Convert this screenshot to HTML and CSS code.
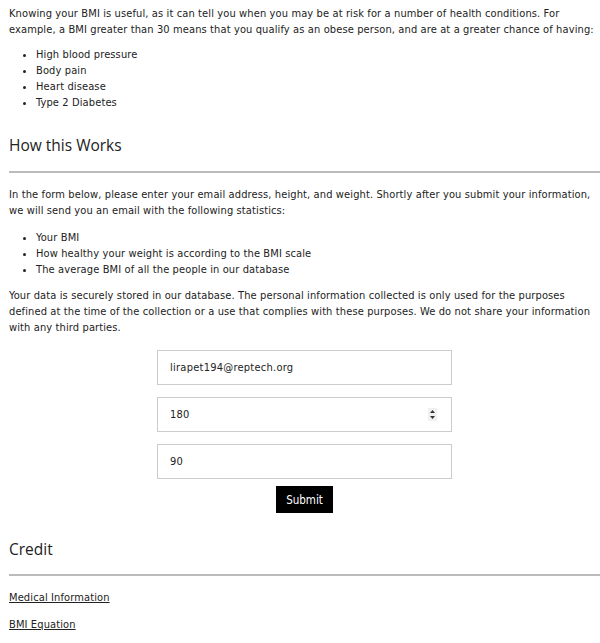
FILE: index.html
```html
<!DOCTYPE html>
<html>
<head>
<meta charset="utf-8">
<link rel="stylesheet" href="styles.css">
</head>
<body>
<p class="intro">Knowing your BMI is useful, as it can tell you when you may be at risk for a number of health conditions. For example, a BMI greater than 30 means that you qualify as an obese person, and are at a greater chance of having:</p>
<ul>
<li>High blood pressure</li>
<li>Body pain</li>
<li>Heart disease</li>
<li>Type 2 Diabetes</li>
</ul>
<h2>How this Works</h2>
<hr>
<p>In the form below, please enter your email address, height, and weight. Shortly after you submit your information, we will send you an email with the following statistics:</p>
<ul>
<li>Your BMI</li>
<li>How healthy your weight is according to the BMI scale</li>
<li>The average BMI of all the people in our database</li>
</ul>
<p>Your data is securely stored in our database. The personal information collected is only used for the purposes defined at the time of the collection or a use that complies with these purposes. We do not share your information with any third parties.</p>
<form class="form">
<input class="field" type="email" value="lirapet194@reptech.org">
<div class="field-wrap">
<input class="field" type="number" value="180">
<span class="spin"><svg width="7" height="11" viewBox="0 0 7 11"><path d="M3.5 1 L6 4 L1 4 Z M3.5 10 L6 7 L1 7 Z" fill="#333"/></svg></span>
</div>
<input class="field" type="number" value="90">
<button class="submit" type="button">Submit</button>
</form>
<h2 class="credit">Credit</h2>
<hr>
<p class="link-row"><a href="#">Medical Information</a></p>
<p class="link-row"><a href="#">BMI Equation</a></p>
</body>
</html>
```
FILE: styles.css
```css
body {
  margin: 0 0 0 9px;
  font-family: "DejaVu Sans Condensed", "DejaVu Sans", sans-serif;
  font-size: 11px;
  letter-spacing: 0.12px;
  line-height: 16px;
  color: #222;
  background: #fff;
  overflow: hidden;
}
p {
  margin: 10px 0 11px;
}
p.intro {
  margin: 6px 0 9px;
}
ul {
  margin: 0;
  padding-left: 27px;
}
h2 {
  font-family: "Open Sans", sans-serif;
  font-weight: 400;
  font-size: 15.5px;
  letter-spacing: 0;
  margin: 26px 0 18px;
}
h2.credit {
  margin: 28px 0 17px;
}
hr {
  border: 0;
  border-top: 2px solid #bbb;
  margin: 0 0 14px;
}
.form {
  display: flex;
  flex-direction: column;
  align-items: center;
  gap: 12px;
  margin: 14px 0 0;
}
.field-wrap {
  position: relative;
}
.spin {
  position: absolute;
  right: 15px;
  top: 11px;
  width: 9px;
  height: 13px;
  background: #f0f0f0;
  display: flex;
  align-items: center;
  justify-content: center;
}
.field {
  box-sizing: border-box;
  display: block;
  width: 295px;
  height: 35px;
  border: 1px solid #ccc;
  padding: 0 12px;
  font-family: "DejaVu Sans Condensed", "DejaVu Sans", sans-serif;
  font-size: 11px;
  letter-spacing: 0.25px;
  color: #222;
  -moz-appearance: textfield;
}
.field::-webkit-inner-spin-button,
.field::-webkit-outer-spin-button {
  -webkit-appearance: none;
  margin: 0;
}
.submit {
  background: #000;
  color: #fff;
  border: 0;
  height: 27px;
  width: 57px;
  font-family: "DejaVu Sans Condensed", "DejaVu Sans", sans-serif;
  font-size: 11.5px;
  margin-top: -5px;
}
.link-row {
  margin: 11px 0;
}
.link-row a {
  color: #222;
}
```
